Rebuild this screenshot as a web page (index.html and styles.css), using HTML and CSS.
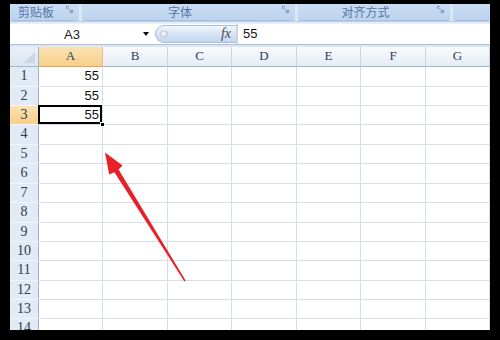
FILE: index.html
```html
<!DOCTYPE html>
<html>
<head>
<meta charset="utf-8">
<link rel="stylesheet" href="styles.css">
</head>
<body>
<div class="screen">
  <div class="frame">
    <div class="ribbon">
      <div class="group g1"><span class="glabel">剪贴板</span><svg class="launch" width="7" height="7" viewBox="0 0 7 7"><path d="M0.5 3V0.5H3M6.5 4V6.5H4M2 2L6 6M6 3.5V6H3.5" fill="none" stroke="#7d97bd" stroke-width="1"/></svg></div>
      <div class="group g2"><span class="glabel">字体</span><svg class="launch" width="7" height="7" viewBox="0 0 7 7"><path d="M0.5 3V0.5H3M6.5 4V6.5H4M2 2L6 6M6 3.5V6H3.5" fill="none" stroke="#7d97bd" stroke-width="1"/></svg></div>
      <div class="group g3"><span class="glabel">对齐方式</span><svg class="launch" width="7" height="7" viewBox="0 0 7 7"><path d="M0.5 3V0.5H3M6.5 4V6.5H4M2 2L6 6M6 3.5V6H3.5" fill="none" stroke="#7d97bd" stroke-width="1"/></svg></div>
      <div class="group g4"></div>
    </div>
    <div class="strip"></div>
    <div class="fbar">
      <div class="namebox"><span class="name">A3</span><span class="drop"></span></div>
      <div class="pill"><span class="dot"></span><span class="fx">fx</span></div>
      <div class="formula">55</div>
    </div>
    <div class="fsep"></div>
    <div class="sheet">
      <div class="row head"><div class="corner"><span class="tri"></span></div><div class="ch on">A</div><div class="ch">B</div><div class="ch">C</div><div class="ch">D</div><div class="ch">E</div><div class="ch">F</div><div class="ch">G</div></div>
      <div class="row"><div class="rh">1</div><div class="c num">55</div><div class="c"></div><div class="c"></div><div class="c"></div><div class="c"></div><div class="c"></div><div class="c"></div></div>
      <div class="row"><div class="rh">2</div><div class="c num">55</div><div class="c"></div><div class="c"></div><div class="c"></div><div class="c"></div><div class="c"></div><div class="c"></div></div>
      <div class="row"><div class="rh on">3</div><div class="c num active">55<span class="handle"></span></div><div class="c"></div><div class="c"></div><div class="c"></div><div class="c"></div><div class="c"></div><div class="c"></div></div>
      <div class="row"><div class="rh">4</div><div class="c"></div><div class="c"></div><div class="c"></div><div class="c"></div><div class="c"></div><div class="c"></div><div class="c"></div></div>
      <div class="row"><div class="rh">5</div><div class="c"></div><div class="c"></div><div class="c"></div><div class="c"></div><div class="c"></div><div class="c"></div><div class="c"></div></div>
      <div class="row"><div class="rh">6</div><div class="c"></div><div class="c"></div><div class="c"></div><div class="c"></div><div class="c"></div><div class="c"></div><div class="c"></div></div>
      <div class="row"><div class="rh">7</div><div class="c"></div><div class="c"></div><div class="c"></div><div class="c"></div><div class="c"></div><div class="c"></div><div class="c"></div></div>
      <div class="row"><div class="rh">8</div><div class="c"></div><div class="c"></div><div class="c"></div><div class="c"></div><div class="c"></div><div class="c"></div><div class="c"></div></div>
      <div class="row"><div class="rh">9</div><div class="c"></div><div class="c"></div><div class="c"></div><div class="c"></div><div class="c"></div><div class="c"></div><div class="c"></div></div>
      <div class="row"><div class="rh">10</div><div class="c"></div><div class="c"></div><div class="c"></div><div class="c"></div><div class="c"></div><div class="c"></div><div class="c"></div></div>
      <div class="row"><div class="rh">11</div><div class="c"></div><div class="c"></div><div class="c"></div><div class="c"></div><div class="c"></div><div class="c"></div><div class="c"></div></div>
      <div class="row"><div class="rh">12</div><div class="c"></div><div class="c"></div><div class="c"></div><div class="c"></div><div class="c"></div><div class="c"></div><div class="c"></div></div>
      <div class="row"><div class="rh">13</div><div class="c"></div><div class="c"></div><div class="c"></div><div class="c"></div><div class="c"></div><div class="c"></div><div class="c"></div></div>
      <div class="row"><div class="rh">14</div><div class="c"></div><div class="c"></div><div class="c"></div><div class="c"></div><div class="c"></div><div class="c"></div><div class="c"></div></div>
    </div>
  </div>
  <svg class="arrow" width="500" height="340" viewBox="0 0 500 340">
    <polygon points="105,152.5 122.5,165.5 118.6,169.6 185.6,280.6 184.4,281.4 114.4,172.2 109.2,174.5" fill="#e8202a"/>
  </svg>
</div>
</body>
</html>
```
FILE: styles.css
```css
html, body {
  margin: 0;
  padding: 0;
  background: #000;
}
.screen {
  position: relative;
  width: 500px;
  height: 340px;
  box-sizing: border-box;
  padding: 4px 10px 10px 10px;
  background: #000;
}
.frame {
  height: 326px;
  overflow: hidden;
  background: #fff;
  display: flex;
  flex-direction: column;
}
.ribbon {
  height: 17px;
  flex: none;
  display: flex;
  gap: 3px;
  background: #dae6f4;
}
.group {
  position: relative;
  height: 16px;
  background: linear-gradient(#c9dcf2, #bcd3ee);
  border-bottom: 1px solid #a9c2e2;
  border-radius: 0 0 3px 3px;
  display: flex;
  align-items: center;
}
.g1 { width: 69px; }
.g2 { width: 213px; }
.g3 { width: 152px; }
.g4 { flex: 1; }
.glabel {
  flex: 1;
  text-align: center;
  padding-right: 17px;
  font-family: "Noto Sans CJK SC", sans-serif;
  font-size: 12px;
  line-height: 16px;
  color: #5677a6;
}
.launch {
  position: absolute;
  right: 6px;
  top: 2px;
}
.strip {
  height: 3px;
  flex: none;
  background: #e4edf8;
  border-top: 1px solid #b7cbe4;
  box-sizing: border-box;
}
.fbar {
  height: 20px;
  flex: none;
  display: flex;
  align-items: stretch;
  background: #fff;
}
.namebox {
  width: 145px;
  display: flex;
  align-items: center;
}
.name {
  width: 124px;
  text-align: center;
  font-family: "Liberation Sans", Arial, sans-serif;
  font-size: 13px;
  color: #222;
}
.drop {
  margin-left: 9px;
  width: 0;
  height: 0;
  border-left: 3.5px solid transparent;
  border-right: 3.5px solid transparent;
  border-top: 4px solid #000;
}
.pill {
  margin: 1px 0 1px 0;
  width: 81px;
  box-sizing: border-box;
  border: 1px solid #a8bfdc;
  border-right: none;
  border-radius: 9px 0 0 9px;
  background: linear-gradient(#f3f7fc, #d6e4f4 50%, #c3d6ee);
  display: flex;
  align-items: center;
  justify-content: space-between;
  padding: 0 5px 0 4px;
}
.dot {
  width: 6px;
  height: 6px;
  border-radius: 50%;
  background: radial-gradient(circle at 40% 40%, #ffffff, #b9c4d2);
  border: 1px solid #c3ccd8;
}
.fx {
  font-family: "Liberation Serif", serif;
  font-style: italic;
  font-size: 14px;
  color: #4a4a4a;
}
.formula {
  flex: 1;
  border-left: 2px solid #c9d6e6;
  padding-left: 5px;
  font-family: "Liberation Sans", Arial, sans-serif;
  font-size: 13px;
  line-height: 20px;
  color: #111;
}
.fsep {
  height: 3px;
  flex: none;
  box-sizing: border-box;
  border-top: 1px solid #aac0dc;
  background: #dce7f5;
}
.sheet {
  flex: none;
  display: grid;
  grid-template-rows: 20px 20px 19px 19px 20px 19px 20px 19px 20px 19px 19px 20px 19px 19px 20px;
}
.row {
  display: grid;
  grid-template-columns: 29px 64px 65px 64px 65px 64px 65px 64px;
  grid-template-rows: 100%;
  min-height: 0;
}
.row > div {
  box-sizing: border-box;
  min-height: 0;
}
.corner {
  position: relative;
  background: linear-gradient(#e9eff8, #dce6f3);
  border-right: 1px solid #9eb6ce;
  border-bottom: 1px solid #9eb6ce;
}
.tri {
  position: absolute;
  right: 3px;
  bottom: 3px;
  width: 0;
  height: 0;
  border-left: 12px solid transparent;
  border-bottom: 11px solid #cbd6e4;
}
.ch {
  background: linear-gradient(#f8fafd, #e6ecf4);
  border-right: 1px solid #c7d4e4;
  border-bottom: 1px solid #9eb6ce;
  text-align: center;
  font-family: "Liberation Serif", serif;
  font-size: 13px;
  line-height: 18px;
  color: #2c3e58;
}
.ch.on {
  background: linear-gradient(#fbe2b3, #f7cf8a);
  border-bottom: 1px solid #f2a24a;
  border-right: 1px solid #e9bd7a;
}
.rh {
  background: #e2eaf6;
  border-right: 1px solid #9eb6ce;
  border-bottom: 1px solid #f3f6fb;
  text-align: center;
  font-family: "Liberation Serif", serif;
  font-size: 14px;
  line-height: 18px;
  color: #2f3a4a;
}
.rh.on {
  background: linear-gradient(#fbe2b3, #f7cf8a);
  border-right: 1px solid #f2a24a;
}
.c {
  border-right: 1px solid #d5dbe7;
  border-bottom: 1px solid #d8dee9;
  background: #fff;
}
.num {
  text-align: right;
  padding-right: 3px;
  font-family: "Liberation Sans", Arial, sans-serif;
  font-size: 13px;
  line-height: 18px;
  color: #111;
}
.active {
  position: relative;
}
.active::after {
  content: "";
  position: absolute;
  top: -1px;
  left: -1px;
  right: 0;
  bottom: 0;
  border: 2px solid #000;
}
.handle {
  position: absolute;
  right: -3px;
  bottom: -3px;
  width: 5px;
  height: 5px;
  background: #000;
  border: 1px solid #fff;
  box-sizing: border-box;
  z-index: 2;
}
.arrow {
  position: absolute;
  left: 0;
  top: 0;
  pointer-events: none;
}
```
